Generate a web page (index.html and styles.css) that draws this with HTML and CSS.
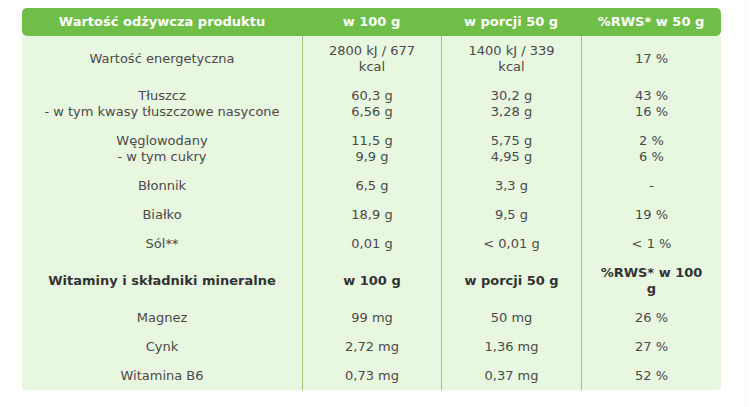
FILE: index.html
```html
<!DOCTYPE html>
<html lang="pl">
<head>
<meta charset="utf-8">
<title>Wartość odżywcza</title>
<link rel="stylesheet" href="styles.css">
</head>
<body>
<div class="page">
  <table class="nutri">
    <colgroup>
      <col class="c1"><col class="c2"><col class="c3"><col class="c4">
    </colgroup>
    <thead>
      <tr>
        <th>Wartość odżywcza produktu</th>
        <th>w 100 g</th>
        <th>w porcji 50 g</th>
        <th>%RWS* w 50 g</th>
      </tr>
    </thead>
    <tbody>
      <tr><td>Wartość energetyczna</td><td>2800 kJ / 677<br>kcal</td><td>1400 kJ / 339<br>kcal</td><td>17 %</td></tr>
      <tr><td>Tłuszcz<br>- w tym kwasy tłuszczowe nasycone</td><td>60,3 g<br>6,56 g</td><td>30,2 g<br>3,28 g</td><td>43 %<br>16 %</td></tr>
      <tr><td>Węglowodany<br>- w tym cukry</td><td>11,5 g<br>9,9 g</td><td>5,75 g<br>4,95 g</td><td>2 %<br>6 %</td></tr>
      <tr><td>Błonnik</td><td>6,5 g</td><td>3,3 g</td><td>-</td></tr>
      <tr><td>Białko</td><td>18,9 g</td><td>9,5 g</td><td>19 %</td></tr>
      <tr><td>Sól**</td><td>0,01 g</td><td>&lt; 0,01 g</td><td>&lt; 1 %</td></tr>
      <tr class="sub"><td>Witaminy i składniki mineralne</td><td>w 100 g</td><td>w porcji 50 g</td><td>%RWS* w 100 g</td></tr>
      <tr><td>Magnez</td><td>99 mg</td><td>50 mg</td><td>26 %</td></tr>
      <tr><td>Cynk</td><td>2,72 mg</td><td>1,36 mg</td><td>27 %</td></tr>
      <tr class="last"><td>Witamina B6</td><td>0,73 mg</td><td>0,37 mg</td><td>52 %</td></tr>
    </tbody>
  </table>
</div>
</body>
</html>
```
FILE: styles.css
```css
html, body {
  margin: 0;
  padding: 0;
  background: #ffffff;
}
body {
  font-family: "DejaVu Sans", Verdana, sans-serif;
  font-size: 13px;
  color: #4a4a4a;
}
.page {
  width: 746px;
  height: 407px;
  box-sizing: border-box;
  border-right: 1px solid #f1f1f1;
  padding: 8px 0 0 22px;
}
.nutri {
  width: 699px;
  table-layout: fixed;
  border-collapse: separate;
  border-spacing: 0;
}
.c1 { width: 280px; }
.c2 { width: 139px; }
.c3 { width: 140px; }
.c4 { width: 140px; }
.nutri th {
  background: #6fbe48;
  color: #ffffff;
  font-weight: bold;
  line-height: 16px;
  padding: 6px 4px;
  text-align: center;
}
.nutri th:first-child { border-radius: 5px 0 0 5px; }
.nutri th:last-child { border-radius: 0 5px 5px 0; }
.nutri td {
  background: #e8f7e0;
  text-align: center;
  vertical-align: middle;
  line-height: 16px;
  padding: 6.5px 14px;
}
.nutri td + td {
  border-left: 1px solid #93c977;
}
.nutri tr.sub td {
  font-weight: bold;
  color: #333333;
}
.nutri tr.last td:first-child { border-bottom-left-radius: 3px; }
.nutri tr.last td:last-child { border-bottom-right-radius: 4px; }
```
